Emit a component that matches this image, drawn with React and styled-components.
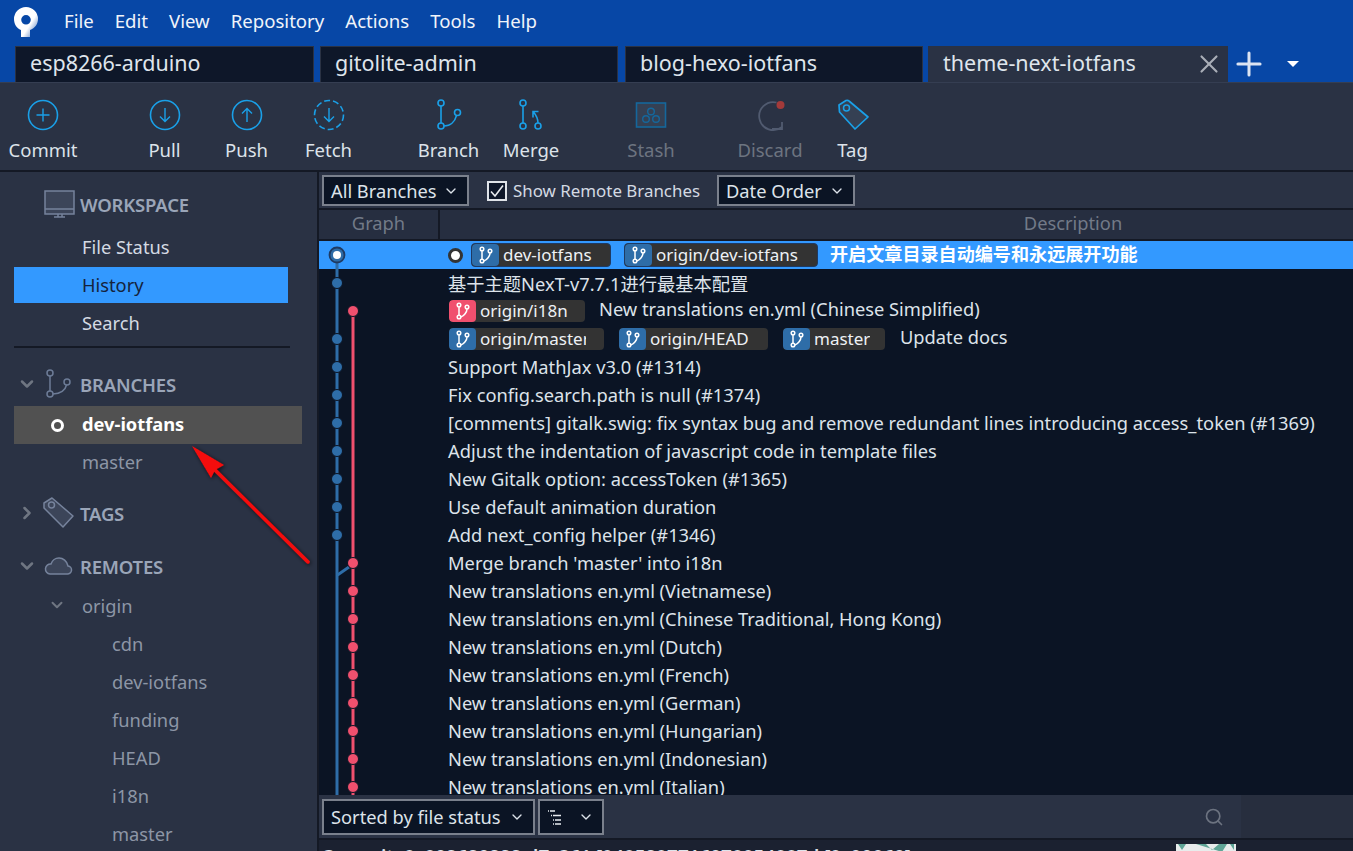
import styled, { createGlobalStyle } from "styled-components";
import { ChevronDown, ChevronRight, Search, X, Plus } from "lucide-react";

const FONT = `"Noto Sans", "Noto Sans CJK SC", sans-serif`;

const GlobalStyle = createGlobalStyle`
  html, body {
    margin: 0;
    padding: 0;
    height: 100%;
    overflow: hidden;
    background: #2a3244;
  }
  * { box-sizing: border-box; }
  body {
    font-family: ${FONT};
    font-size: 18.3px;
    color: #dde3ea;
  }
`;

const Window = styled.div`
  position: relative;
  width: 1353px;
  height: 851px;
  overflow: hidden;
  display: flex;
  flex-direction: column;
`;

const TitleBar = styled.div`
  height: 82px;
  flex: none;
  background: #0747a6;
  display: flex;
  flex-direction: column;
`;

const MenuBar = styled.div`
  height: 46px;
  display: flex;
  align-items: flex-start;
  padding: 7px 0 0 13px;
`;

const MenuItems = styled.nav`
  display: flex;
  gap: 21px;
  margin-left: 25px;
  padding-top: 1px;
`;

const MenuItem = styled.span`
  font-size: 18.6px;
  line-height: 26px;
  color: #f0f4fa;
`;

const TabStrip = styled.div`
  display: flex;
  align-items: center;
  height: 36px;
  padding-left: 15px;
`;

const Tab = styled.div`
  width: ${(p) => p.$w}px;
  height: 36px;
  flex: none;
  margin-right: ${(p) => p.$gap}px;
  padding-left: ${(p) => (p.$active ? 15 : 14)}px;
  display: flex;
  align-items: center;
  justify-content: space-between;
  font-size: 21.5px;
  line-height: 30px;
  padding-bottom: 3px;
  color: #dfe5ec;
  background: ${(p) => (p.$active ? "#2a3244" : "#0e1729")};
  border: ${(p) => (p.$active ? "none" : "1px solid #2a3244")};
  border-bottom: none;
`;

const TabClose = styled(X)`
  color: #a9aeb7;
  margin-right: 4px;
  margin-top: 3px;
`;

const TabPlus = styled(Plus)`
  flex: none;
  color: #dce4f2;
  margin-left: 2px;
`;

const TabCaret = styled.span`
  width: 0;
  height: 0;
  flex: none;
  margin-left: 19px;
  border-left: 6px solid transparent;
  border-right: 6px solid transparent;
  border-top: 6px solid #fff;
`;

const Toolbar = styled.div`
  height: 90px;
  flex: none;
  display: flex;
  padding: 14px 0 0 2px;
  border-top: 1px solid #353e52;
  border-bottom: 2px solid #141925;
  background: #2a3244;
`;

const ToolButton = styled.div`
  width: 82px;
  flex: none;
  margin-left: ${(p) => p.$gap}px;
  display: flex;
  flex-direction: column;
  align-items: center;
  font-size: 18.5px;
  line-height: 26px;
  color: ${(p) => (p.$off ? "#6d7480" : "#dde3ea")};
`;

const ToolIcon = styled.svg`
  display: block;
  width: 36px;
  height: 36px;
  margin-bottom: 4px;
  fill: none;
`;

const Body = styled.div`
  flex: 1;
  display: flex;
  min-height: 0;
`;

const Sidebar = styled.aside`
  width: 319px;
  flex: none;
  border-right: 2px solid #141925;
  background: #2a3244;
  padding: 0 0 0 14px;
  overflow: hidden;
`;

const SectionHead = styled.div`
  display: flex;
  align-items: center;
  height: ${(p) => p.$h}px;
  margin-top: ${(p) => p.$top || 0}px;
  font-size: 18.5px;
  font-weight: 600;
  letter-spacing: -0.2px;
  color: #9aa5b8;
`;

const Caret = styled.span`
  width: 28px;
  flex: none;
  display: flex;
  color: #6f7682;
  margin-left: 3px;
`;

const SectionIcon = styled.svg`
  width: 32px;
  height: 32px;
  flex: none;
  fill: none;
  overflow: visible;
  margin-left: ${(p) => p.$ml || 0}px;
  margin-right: ${(p) => p.$mr || 3}px;
`;

const NavList = styled.div`
  margin-top: -10px;
`;

const NavItem = styled.div`
  height: 36px;
  width: 274px;
  padding: 0 0 2px 68px;
  display: flex;
  align-items: center;
  margin-top: 2px;
  color: ${(p) => (p.$active ? "#15233c" : "#d4dae3")};
  background: ${(p) => (p.$active ? "#3399ff" : "transparent")};
`;

const Divider = styled.div`
  height: 2px;
  width: 276px;
  margin-top: 5px;
  background: #141925;
`;

const BranchItem = styled.div`
  position: relative;
  height: 38px;
  width: 288px;
  padding: 0 0 3px 68px;
  display: flex;
  align-items: center;
  font-weight: ${(p) => (p.$current ? 700 : 400)};
  color: ${(p) => (p.$current ? "#ffffff" : "#8d96a6")};
  background: ${(p) => (p.$current ? "#515151" : "transparent")};
`;

const CurrentDot = styled.span`
  position: absolute;
  left: 37px;
  top: 13px;
  width: 13px;
  height: 13px;
  border-radius: 50%;
  border: 3px solid #fff;
  background: #515151;
`;

const RemoteList = styled.div`
  margin-top: 3px;
`;

const RemoteRow = styled.div`
  height: 38px;
  display: flex;
  align-items: center;
  color: #8d96a6;
  padding-bottom: 2px;
  padding-left: ${(p) => p.$pad}px;
`;

const RemoteCaret = styled(ChevronDown)`
  color: #6f7682;
  margin-right: 16px;
`;

const Main = styled.main`
  flex: 1;
  min-width: 0;
  display: flex;
  flex-direction: column;
  overflow: hidden;
  background: #0b1424;
`;

const FilterBar = styled.div`
  height: 38px;
  flex: none;
  display: flex;
  align-items: flex-start;
  gap: 18px;
  padding: 3px 0 0 3px;
  background: #2a3244;
  border-bottom: 2px solid #141925;
`;

const Select = styled.div`
  height: ${(p) => p.$h || 31}px;
  width: ${(p) => p.$w}px;
  padding: 0 8px 0 7px;
  display: flex;
  align-items: center;
  justify-content: space-between;
  color: #dde3ea;
  background: #0b1424;
  border: 2px solid #7a808c;
  flex: none;
`;

const CheckLabel = styled.label`
  display: flex;
  align-items: center;
  gap: 6px;
  width: 212px;
  height: 31px;
  flex: none;
  font-size: 16.9px;
  white-space: nowrap;
  color: #d4dae3;
`;

const CheckBox = styled.span`
  width: 20px;
  height: 20px;
  flex: none;
  display: flex;
  align-items: center;
  justify-content: center;
  background: #0e1729;
  border: 2px solid #dfe3e8;
`;

const ColumnHead = styled.div`
  height: 31px;
  flex: none;
  display: grid;
  grid-template-columns: 121px 1266px;
  background: #262e40;
  border-bottom: 2px solid #141925;
  color: #727a88;
`;

const ColumnCell = styled.div`
  display: flex;
  align-items: center;
  justify-content: center;
  padding-bottom: 5px;
  border-right: ${(p) => (p.$first ? "2px solid #141925" : "none")};
`;

const Commits = styled.div`
  position: relative;
  flex: 1;
  min-height: 0;
  overflow: hidden;
`;

const Graph = styled.svg`
  position: absolute;
  left: 0;
  top: 0;
  pointer-events: none;
`;

const Row = styled.div`
  height: 28px;
  padding-left: ${(p) => p.$pad || 129}px;
  display: flex;
  align-items: center;
  white-space: nowrap;
  color: #dde3ea;
  ${(p) => p.$selected && "background: #3399ff; color: #fff; font-weight: 700;"}
`;

const RowText = styled.span`
  padding-bottom: ${(p) => p.$lift}px;
  font-size: ${(p) => p.$size || 18.3}px;
`;

const HeadDot = styled.span`
  width: 15px;
  height: 15px;
  flex: none;
  border-radius: 50%;
  background: #fff;
  border: 3px solid #333;
  margin-right: 8px;
`;

const Ref = styled.span`
  display: inline-flex;
  align-items: center;
  flex: none;
  height: ${(p) => (p.$big ? 24 : 22)}px;
  width: ${(p) => p.$w}px;
  margin-right: ${(p) => p.$gap}px;
  border-radius: 4px;
  background: #333;
  overflow: hidden;
  font-size: 17px;
  font-weight: 400;
  color: #eef1f5;
  ${(p) => p.$big && "border: 1px solid #1e3a63;"}
`;

const RefIcon = styled.span`
  width: 27px;
  align-self: stretch;
  flex: none;
  display: flex;
  align-items: center;
  justify-content: center;
  margin-right: 4px;
  border-radius: 4px;
  background: ${(p) => (p.$pink ? "#f0506e" : "#2e6da8")};
`;

const RefName = styled.span`
  overflow: hidden;
  padding-bottom: 1px;
  max-width: ${(p) => (p.$max ? `${p.$max}px` : "none")};
`;

const LowerBar = styled.div`
  height: 45px;
  flex: none;
  display: flex;
  align-items: center;
  background: #2a3244;
  border-bottom: 2px solid #141925;
`;

const LowerLeft = styled.div`
  width: 922px;
  height: 100%;
  display: flex;
  align-items: center;
  gap: 3px;
  padding-left: 3px;
`;

const LowerRight = styled.div`
  flex: 1;
  height: 100%;
  background: #272e3e;
`;

const FindIcon = styled(Search)`
  color: #6c7380;
  margin-left: auto;
  margin-right: 17px;
`;

const CommitLine = styled.div`
  height: 11px;
  flex: none;
  position: relative;
  background: #1b2130;
  overflow: hidden;
`;

const CommitText = styled.div`
  padding-top: 6px;
  padding-left: 2px;
  font-size: 18.9px;
  line-height: 22px;
  font-weight: 600;
  color: #dde3ea;
  white-space: nowrap;
`;

const Thumb = styled.svg`
  position: absolute;
  left: 857px;
  top: 4px;
`;

const Arrow = styled.svg`
  position: absolute;
  left: 0;
  top: 0;
  pointer-events: none;
`;

const BranchGlyph = () => (
  <svg width="16" height="18" viewBox="0 0 16 18" fill="none" stroke="#fff" strokeWidth="1.5">
    <circle cx="4" cy="3" r="1.8" />
    <circle cx="4" cy="15" r="1.8" />
    <circle cx="12" cy="5" r="1.8" />
    <path d="M4 5v8M12 7c0 3-3 7-6.200 8" />
  </svg>
);

const C = "#1aa0e8";

const toolIcons = {
  commit: (
    <>
      <circle cx="18" cy="18" r="14.500" stroke={C} strokeWidth="1.600" />
      <path d="M18 11.500v13M11.500 18h13" stroke={C} strokeWidth="1.400" />
    </>
  ),
  pull: (
    <>
      <circle cx="18" cy="18" r="14.500" stroke={C} strokeWidth="1.600" />
      <path d="M18 11v13M13 19.500l5 5 5-5" stroke={C} strokeWidth="1.400" />
    </>
  ),
  push: (
    <>
      <circle cx="18" cy="18" r="14.500" stroke={C} strokeWidth="1.600" />
      <path d="M18 25V12M13 16.500l5-5 5 5" stroke={C} strokeWidth="1.400" />
    </>
  ),
  fetch: (
    <>
      <circle cx="18" cy="18" r="14.500" stroke={C} strokeWidth="1.600" strokeDasharray="6 3" />
      <path d="M18 11v13M13 19.500l5 5 5-5" stroke={C} strokeWidth="1.400" />
    </>
  ),
  branch: (
    <>
      <circle cx="10" cy="6" r="3" stroke={C} strokeWidth="1.600" />
      <circle cx="10" cy="29" r="3" stroke={C} strokeWidth="1.600" />
      <circle cx="26.500" cy="15.500" r="3" stroke={C} strokeWidth="1.600" />
      <path d="M10 9v17M25.500 18.500c-1.500 6-6 10.500-12.500 10.500" stroke={C} strokeWidth="1.600" />
    </>
  ),
  merge: (
    <>
      <circle cx="10" cy="6" r="3" stroke={C} strokeWidth="1.600" />
      <circle cx="10" cy="29" r="3" stroke={C} strokeWidth="1.600" />
      <circle cx="25" cy="29" r="3" stroke={C} strokeWidth="1.600" />
      <path d="M10 9v17M25 26c0-5-2-8-4.500-11M20 20.500v-6h5.500" stroke={C} strokeWidth="1.600" />
    </>
  ),
  stash: (
    <>
      <rect x="3.500" y="6" width="29" height="24" fill="#354053" stroke="#15679c" strokeWidth="1.600" />
      <circle cx="18" cy="14.500" r="3.300" stroke="#15679c" strokeWidth="1.400" />
      <circle cx="13" cy="22" r="3.300" stroke="#15679c" strokeWidth="1.400" />
      <circle cx="23" cy="22" r="3.300" stroke="#15679c" strokeWidth="1.400" />
    </>
  ),
  discard: (
    <>
      <path d="M24.500 5.500A14 14 0 1 0 30 30" stroke="#515b70" strokeWidth="1.800" />
      <path d="M20 32h10v-7" stroke="#515b70" strokeWidth="1.800" />
      <circle cx="28.500" cy="8" r="4" fill="#a33a3a" />
    </>
  ),
  tag: (
    <>
      <path
        d="M4 8 11 3.500Q13 3 14 4L33 20 20 32 4.500 15z"
        fill="#354053"
        stroke={C}
        strokeWidth="1.700"
        strokeLinejoin="round"
      />
      <circle cx="11.500" cy="11" r="3" stroke={C} strokeWidth="1.500" />
    </>
  ),
};

const tools = [
  ["Commit", 0, "commit"],
  ["Pull", 39.5, "pull"],
  ["Push", 0, "push"],
  ["Fetch", 0, "fetch"],
  ["Branch", 38, "branch"],
  ["Merge", 0.5, "merge"],
  ["Stash", 38, "stash", true],
  ["Discard", 37, "discard", true],
  ["Tag", 0.5, "tag"],
];

const menus = ["File", "Edit", "View", "Repository", "Actions", "Tools", "Help"];

const rows = [
  { refs: [["origin/i18n", 136, 14, true]], text: "New translations en.yml (Chinese Simplified)", pad: 130 },
  {
    refs: [
      ["origin/master", 155, 15, false, 106],
      ["origin/HEAD", 149, 15],
      ["master", 102, 15],
    ],
    text: "Update docs",
    pad: 130,
  },
  { text: "Support MathJax v3.0 (#1314)" },
  { text: "Fix config.search.path is null (#1374)" },
  { text: "[comments] gitalk.swig: fix syntax bug and remove redundant lines introducing access_token (#1369)" },
  { text: "Adjust the indentation of javascript code in template files" },
  { text: "New Gitalk option: accessToken (#1365)" },
  { text: "Use default animation duration" },
  { text: "Add next_config helper (#1346)" },
  { text: "Merge branch 'master' into i18n" },
  { text: "New translations en.yml (Vietnamese)" },
  { text: "New translations en.yml (Chinese Traditional, Hong Kong)" },
  { text: "New translations en.yml (Dutch)" },
  { text: "New translations en.yml (French)" },
  { text: "New translations en.yml (German)" },
  { text: "New translations en.yml (Hungarian)" },
  { text: "New translations en.yml (Indonesian)" },
  { text: "New translations en.yml (Italian)" },
];

const BLUE = "#2e6da8";
const PINK = "#f0506e";
const GROUND = "#0b1424";

const CommitGraph = () => {
  const y = (i) => 14 + i * 28;
  const blue = [1, 3, 4, 5, 6, 7, 8, 9, 10];
  const pink = [2, 11, 12, 13, 14, 15, 16, 17, 18, 19];
  return (
    <Graph width="120" height="560">
      <path d={`M18 ${y(0)}V560`} stroke={BLUE} strokeWidth="3" />
      <path d={`M34 ${y(2)}V560`} stroke={PINK} strokeWidth="3" />
      <path d={`M18.500 ${y(11) + 12}L30 ${y(11) + 4}`} stroke={BLUE} strokeWidth="3" />
      {blue.map((i) => (
        <circle key={i} cx="18" cy={y(i)} r="5.500" fill={BLUE} stroke={GROUND} strokeWidth="1" />
      ))}
      {pink.map((i) => (
        <circle key={i} cx="34" cy={y(i)} r="5.500" fill={PINK} stroke={GROUND} strokeWidth="1" />
      ))}
      <circle cx="18" cy={y(0)} r="7.500" fill={BLUE} stroke="#1e3a63" strokeWidth="1.800" />
      <circle cx="18" cy={y(0)} r="4" fill="#fff" />
    </Graph>
  );
};

const RefTag = ({ name, w, gap, pink, big, max }) => (
  <Ref $w={w} $gap={gap} $big={big}>
    <RefIcon $pink={pink}>
      <BranchGlyph />
    </RefIcon>
    <RefName $max={max}>{name}</RefName>
  </Ref>
);

const App = () => (
  <Window>
    <GlobalStyle />
    <TitleBar>
      <MenuBar>
        <svg width="26" height="30" viewBox="0 0 26 30">
          <defs>
            <linearGradient id="logoShade" x1="0.4" y1="0.4" x2="0.9" y2="0.8">
              <stop offset="0.5" stopColor="#fff" />
              <stop offset="1" stopColor="#7f9fd0" />
            </linearGradient>
          </defs>
          <path
            fillRule="evenodd"
            fill="url(#logoShade)"
            d="M13 0a12 12 0 0 1 12 12c0 5-3 9-8 11v7H8v-7C3.500 21 1 17 1 12A12 12 0 0 1 13 0zm0 8a4.800 4.800 0 1 0 0 9.600 4.800 4.800 0 0 0 0-9.600z"
          />
        </svg>
        <MenuItems>
          {menus.map((m) => (
            <MenuItem key={m}>{m}</MenuItem>
          ))}
        </MenuItems>
      </MenuBar>
      <TabStrip>
        <Tab $w={299} $gap={6}>esp8266-arduino</Tab>
        <Tab $w={298} $gap={7}>gitolite-admin</Tab>
        <Tab $w={298} $gap={5}>blog-hexo-iotfans</Tab>
        <Tab $w={300} $gap={0} $active>
          theme-next-iotfans
          <TabClose size={30} strokeWidth={1.7} />
        </Tab>
        <TabPlus size={38} strokeWidth={1.9} />
        <TabCaret />
      </TabStrip>
    </TitleBar>

    <Toolbar>
      {tools.map(([label, gap, icon, off]) => (
        <ToolButton key={label} $gap={gap} $off={off}>
          <ToolIcon viewBox="0 0 36 36">{toolIcons[icon]}</ToolIcon>
          {label}
        </ToolButton>
      ))}
    </Toolbar>

    <Body>
      <Sidebar>
        <SectionHead $h={65}>
          <SectionIcon viewBox="0 0 32 32" $ml={30} $mr={4}>
            <rect x="1" y="2" width="29" height="23" fill="#3c4559" stroke="#76839c" strokeWidth="1.500" />
            <path d="M1 20h29M10 28h11M14 25v3M18 25v3" stroke="#76839c" strokeWidth="1.500" />
          </SectionIcon>
          WORKSPACE
        </SectionHead>
        <NavList>
          <NavItem>File Status</NavItem>
          <NavItem $active>History</NavItem>
          <NavItem>Search</NavItem>
        </NavList>
        <Divider />
        <SectionHead $h={44} $top={14}>
          <Caret>
            <ChevronDown size={20} strokeWidth={3} />
          </Caret>
          <SectionIcon viewBox="0 0 32 32">
            <circle cx="5" cy="5" r="3" stroke="#6d7c97" strokeWidth="1.500" />
            <circle cx="5" cy="26" r="3" stroke="#6d7c97" strokeWidth="1.500" />
            <circle cx="22" cy="14" r="3" stroke="#6d7c97" strokeWidth="1.500" />
            <path d="M5 8v15M21.500 17c-1 5-6 9-13.500 9" stroke="#6d7c97" strokeWidth="1.500" />
          </SectionIcon>
          BRANCHES
        </SectionHead>
        <BranchItem $current>
          <CurrentDot />
          dev-iotfans
        </BranchItem>
        <BranchItem>master</BranchItem>
        <SectionHead $h={36} $top={13}>
          <Caret>
            <ChevronRight size={20} strokeWidth={3} />
          </Caret>
          <SectionIcon viewBox="0 0 32 32">
            <path
              d="M-1 6 7 1 28 19 18 30-1 11z"
              fill="#3c4559"
              stroke="#76839c"
              strokeWidth="1.500"
              strokeLinejoin="round"
            />
            <circle cx="6.500" cy="8" r="3" stroke="#76839c" strokeWidth="1.500" />
          </SectionIcon>
          TAGS
        </SectionHead>
        <SectionHead $h={36} $top={17}>
          <Caret>
            <ChevronDown size={20} strokeWidth={3} />
          </Caret>
          <SectionIcon viewBox="0 0 32 32">
            <path
              d="M5 24h17a4 4 0 0 0 1-8c-1-5-5-8-9-8-4 0-7 3-8 6a5 5 0 0 0-1 10z"
              fill="#3c4559"
              stroke="#76839c"
              strokeWidth="1.500"
            />
          </SectionIcon>
          REMOTES
        </SectionHead>
        <RemoteList>
          <RemoteRow $pad={34}>
            <RemoteCaret size={18} strokeWidth={2.6} />
            origin
          </RemoteRow>
          {["cdn", "dev-iotfans", "funding", "HEAD", "i18n", "master"].map((r) => (
            <RemoteRow key={r} $pad={98}>{r}</RemoteRow>
          ))}
        </RemoteList>
      </Sidebar>

      <Main>
        <FilterBar>
          <Select $w={147}>
            All Branches
            <ChevronDown size={16} />
          </Select>
          <CheckLabel>
            <CheckBox>
              <svg width="16" height="16" viewBox="0 0 16 16" fill="none" stroke="#e8ebef" strokeWidth="1.600">
                <path d="M2 8.500 6 13 14 2.500" />
              </svg>
            </CheckBox>
            Show Remote Branches
          </CheckLabel>
          <Select $w={138}>
            Date Order
            <ChevronDown size={16} />
          </Select>
        </FilterBar>
        <ColumnHead>
          <ColumnCell $first>Graph</ColumnCell>
          <ColumnCell>Description</ColumnCell>
        </ColumnHead>
        <Commits>
          <Row $selected $pad={129}>
            <HeadDot />
            <RefTag name="dev-iotfans" w={140} gap={13} big />
            <RefTag name="origin/dev-iotfans" w={194} gap={12} big />
            <RowText $lift={4} $size={18.1}>开启文章目录自动编号和永远展开功能</RowText>
          </Row>
          <Row>
            <RowText $lift={0}>基于主题NexT-v7.7.1进行最基本配置</RowText>
          </Row>
          {rows.map((r) => (
            <Row key={r.text} $pad={r.pad}>
              {r.refs &&
                r.refs.map(([name, w, gap, pink, max]) => (
                  <RefTag key={name} name={name} w={w} gap={gap} pink={pink} max={max} />
                ))}
              <RowText $lift={r.refs ? 6 : 2}>{r.text}</RowText>
            </Row>
          ))}
          <CommitGraph />
        </Commits>
        <LowerBar>
          <LowerLeft>
            <Select $w={213} $h={36}>
              Sorted by file status
              <ChevronDown size={16} />
            </Select>
            <Select $w={66} $h={36}>
              <svg width="16" height="16" viewBox="0 0 16 16" stroke="#e8ebef" strokeWidth="1.300" fill="none">
                <path d="M1 2h1M3 2h5M4 6.500h1M6 6.500h8M6 11h1M8 11h6M6 15h1M8 15h6" />
              </svg>
              <ChevronDown size={16} />
            </Select>
            <FindIcon size={20} strokeWidth={2} />
          </LowerLeft>
          <LowerRight />
        </LowerBar>
        <CommitLine>
          <CommitText>Commit: 8c802620222 d7c361 [9485297716078854887d [9c90860]</CommitText>
          <Thumb width="60" height="10" viewBox="0 0 60 10">
            <rect width="60" height="10" fill="#e8ecec" />
            <path d="M2 0h8l-4 6zM20 0h10l6 6 7-6h8l-5 8zM54 0h4v6z" fill="#5fa596" />
          </Thumb>
        </CommitLine>
      </Main>
    </Body>

    <Arrow width="1353" height="851">
      <defs>
        <filter id="arrowShadow" x="-20%" y="-20%" width="140%" height="140%">
          <feDropShadow dx="1" dy="1" stdDeviation="2" floodColor="#000" floodOpacity="0.7" />
        </filter>
      </defs>
      <g filter="url(#arrowShadow)">
        <path d="M308 562 215 470" stroke="#f40a0a" strokeWidth="3.500" strokeLinecap="round" />
        <path d="M192 446 224 465 215 470 211 478z" fill="#f40a0a" />
      </g>
    </Arrow>
  </Window>
);

export default App;
